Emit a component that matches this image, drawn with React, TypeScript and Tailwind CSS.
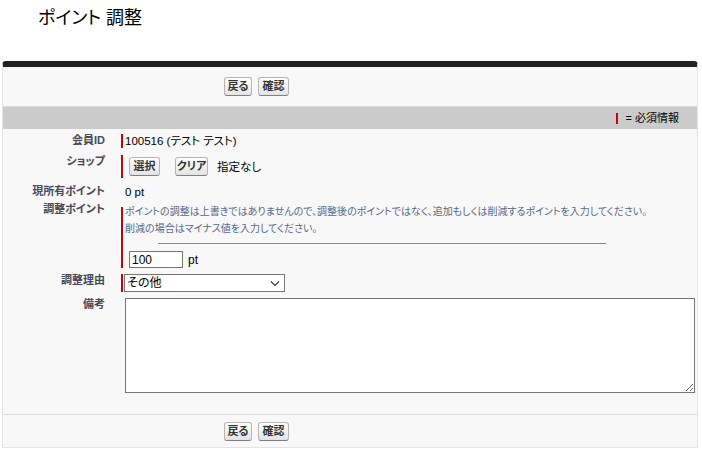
import React from "react";

const FONT = "[font-family:'Liberation_Sans','Noto_Sans_CJK_JP',sans-serif] [font-feature-settings:'palt']";

function Btn({ label, w }: { label: string; w: string }) {
  return (
    <button
      className={`${w} h-[19px] flex items-center justify-center border border-[#b5b5b5] border-b-[#7f7f7f] rounded-[3px] bg-linear-to-b from-white to-[#e3e3e3] text-[11px] font-bold text-[#333] leading-none`}
    >
      {label}
    </button>
  );
}

function Bar({ extra = "" }: { extra?: string }) {
  return <div className={`w-[2px] shrink-0 bg-[#c00] self-stretch ${extra}`} />;
}

function Label({ children }: { children: React.ReactNode }) {
  return (
    <div className="w-[118px] shrink-0 pr-[16px] text-right text-[11px] leading-[12px] font-bold text-[#4a4a56]">
      {children}
    </div>
  );
}

function ButtonRow({ h }: { h: string }) {
  return (
    <div className={`${h} flex items-center pl-[221px] gap-[6px]`}>
      <Btn label="戻る" w="w-[28px]" />
      <Btn label="確認" w="w-[31px]" />
    </div>
  );
}

export default function App() {
  return (
    <div className={`w-[702px] h-[455px] bg-white text-black ${FONT}`}>
      <div className="h-[61px] pl-[38px] pt-[6px] text-[18px] leading-[24px]">ポイント 調整</div>
      <div className="ml-[2px] w-[696px] rounded-t-[4px] border-t-[6px] border-t-[#222] border-x border-b border-x-[#e4e4e4] border-b-[#e4e4e4] bg-[#f8f8f8]">
        <div className="border-b border-[#dcdcdc]">
          <ButtonRow h="h-[39px]" />
        </div>
        <div className="h-[22px] bg-[#cbcbcb] flex items-center justify-end pr-[18px] text-[11px]">
          <div className="w-[2px] h-[11px] bg-[#c00] mr-[8px]" />
          <span>= 必須情報</span>
        </div>

        <div className="pt-[5px] pb-[21px] border-b border-[#dcdcdc]">
          {/* 会員ID */}
          <div className="flex">
            <Label>会員ID</Label>
            <div className="flex">
              <Bar />
              <div className="ml-[2px] text-[11.5px] leading-[14px]">100516 (テスト テスト)</div>
            </div>
          </div>

          {/* ショップ */}
          <div className="flex mt-[7px]">
            <Label>ショップ</Label>
            <div className="flex">
              <Bar />
              <div className="ml-[6px] py-[2px] flex items-center">
                <Btn label="選択" w="w-[31px]" />
                <div className="ml-[15px]">
                  <Btn label="クリア" w="w-[33px]" />
                </div>
                <span className="ml-[9px] text-[11.5px] leading-[14px]">指定なし</span>
              </div>
            </div>
          </div>

          {/* 現所有ポイント */}
          <div className="flex mt-[7px]">
            <Label>現所有ポイント</Label>
            <div className="pl-[4px] text-[11.5px] leading-[14px]">0 pt</div>
          </div>

          {/* 調整ポイント */}
          <div className="flex mt-[4px]">
            <Label>調整ポイント</Label>
            <div className="flex">
              <Bar extra="mt-[4px]" />
              <div className="ml-[2px]">
                <div className="whitespace-nowrap text-[10px] leading-[17px] text-[#56688a]">
                  ポイントの調整は上書きではありませんので、調整後のポイントではなく、追加もしくは削減するポイントを入力してください。
                </div>
                <div className="whitespace-nowrap text-[10px] leading-[17px] text-[#56688a]">
                  削減の場合はマイナス値を入力してください。
                </div>
                <div className="mt-[6px] ml-[33px] w-[448px] h-px bg-[#778a9e]" />
                <div className="mt-[7px] ml-[4px] flex items-center">
                  <input
                    defaultValue="100"
                    className="w-[54px] h-[17px] border border-[#767676] bg-white px-[2px] text-[12px] leading-[15px] outline-none"
                  />
                  <span className="ml-[5px] text-[12px] leading-[14px]">pt</span>
                </div>
              </div>
            </div>
          </div>

          {/* 調整理由 */}
          <div className="flex mt-[6px]">
            <Label>調整理由</Label>
            <div className="flex">
              <Bar />
              <div className="ml-[1px] relative w-[161px] h-[18px] border border-[#767676] bg-white flex items-center pl-[2px] text-[12px] leading-[14px]">
                <span>その他</span>
                <svg className="absolute right-[4px] top-[5px]" width="10" height="7" viewBox="0 0 10 7" fill="none">
                  <path d="M1 1.5 L5 5.5 L9 1.5" stroke="#333" strokeWidth="1.1" />
                </svg>
              </div>
            </div>
          </div>

          {/* 備考 */}
          <div className="flex mt-[6px]">
            <Label>備考</Label>
            <div className="pl-[4px]">
              <textarea className="block w-[570px] h-[95px] border border-[#767676] bg-white outline-none" />
            </div>
          </div>
        </div>

        <ButtonRow h="h-[32px]" />
      </div>
    </div>
  );
}
